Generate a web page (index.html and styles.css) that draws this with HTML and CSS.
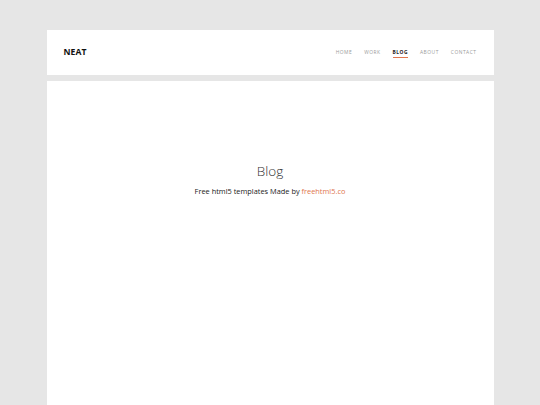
FILE: index.html
```html
<!DOCTYPE html>
<html>
<head>
<meta charset="utf-8">
<link rel="stylesheet" href="styles.css">
</head>
<body>
<div class="page">
  <header class="header">
    <div class="logo">NEAT</div>
    <nav class="nav">
      <a>HOME</a>
      <a>WORK</a>
      <a class="active">BLOG</a>
      <a>ABOUT</a>
      <a>CONTACT</a>
    </nav>
  </header>
  <main class="main">
    <h1 class="title">Blog</h1>
    <p class="sub">Free html5 templates Made by <span class="link">freehtml5.co</span></p>
  </main>
</div>
</body>
</html>
```
FILE: styles.css
```css
html, body { margin: 0; padding: 0; }
body {
  background: #e6e6e6;
  font-family: "Open Sans", "DejaVu Sans", sans-serif;
  height: 405px;
  overflow: hidden;
}
.page {
  width: 447px;
  margin: 0 auto;
  padding-top: 30px;
}
.header {
  background: #fff;
  height: 45px;
  display: flex;
  align-items: center;
  justify-content: space-between;
  padding: 0 17px;
  box-sizing: border-box;
}
.logo {
  font-weight: 700;
  font-size: 8.6px;
  color: #111;
  letter-spacing: 0.1px;
  margin-bottom: 1px;
}
.nav {
  display: flex;
  gap: 12px;
}
.nav a {
  font-size: 4.9px;
  letter-spacing: 0.5px;
  color: #9a9a9a;
  font-weight: 400;
  padding-bottom: 2px;
  margin-top: 2px;
  border-bottom: 1px solid transparent;
}
.nav a.active {
  color: #222;
  font-weight: 700;
  border-bottom: 1px solid #e0764f;
}
.main {
  background: #fff;
  margin-top: 6px;
  height: 330px;
  text-align: center;
  padding-top: 81px;
  box-sizing: border-box;
}
.title {
  font-weight: 300;
  font-size: 13.5px;
  color: #333;
  margin: 0;
}
.sub {
  margin: 6px 0 0;
  font-size: 7.4px;
  color: #1a1a1a;
}
.link { color: #e0764f; }
```
